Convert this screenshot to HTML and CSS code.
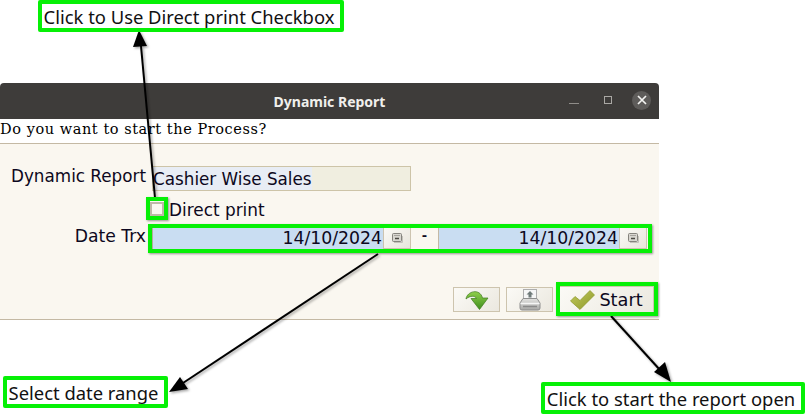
FILE: index.html
```html
<!DOCTYPE html>
<html lang="en">
<head>
    <meta charset="UTF-8">
    <title>Dynamic Report</title>
    <link rel="stylesheet" href="styles.css">
</head>
<body>
    <div class="pagina">
        <div class="janela">
            <div class="titulo">
                <span class="titulo-texto">Dynamic Report</span>
                <div class="controles">
                    <span class="ctl-min"></span>
                    <span class="ctl-max"></span>
                    <span class="ctl-close">
                        <svg width="10" height="10" viewBox="0 0 10 10"><path d="M1 1L9 9M9 1L1 9" stroke="#f4f4f2" stroke-width="1.7" fill="none"/></svg>
                    </span>
                </div>
            </div>
            <div class="pergunta">Do you want to start the Process?</div>
            <div class="form">
                <div class="linha linha-report">
                    <label class="rotulo">Dynamic Report</label>
                    <div class="campo-report"><span class="campo-sel">Cashier Wise Sales</span></div>
                </div>
                <div class="linha linha-check">
                    <span class="rotulo"></span>
                    <span class="check"></span>
                    <span class="check-texto">Direct print</span>
                </div>
                <div class="linha linha-data">
                    <label class="rotulo rotulo-data">Date Trx</label>
                    <div class="datas">
                        <div class="data data-1">14/10/2024</div>
                        <button class="cal">
                            <svg width="13" height="12" viewBox="0 0 13 12"><rect x="1.500" y="1.500" width="9" height="8" rx="1" fill="#d8d6d0" stroke="#85837d"/><path d="M3 3.500h6" stroke="#a5a39d"/><path d="M4 6.500h4" stroke="#4a4843" stroke-width="1.500"/><path d="M3 10.500h8.500V4" stroke="#c4c2bb" fill="none"/></svg>
                        </button>
                        <div class="traco">-</div>
                        <div class="data data-2">14/10/2024</div>
                        <button class="cal">
                            <svg width="13" height="12" viewBox="0 0 13 12"><rect x="1.500" y="1.500" width="9" height="8" rx="1" fill="#d8d6d0" stroke="#85837d"/><path d="M3 3.500h6" stroke="#a5a39d"/><path d="M4 6.500h4" stroke="#4a4843" stroke-width="1.500"/><path d="M3 10.500h8.500V4" stroke="#c4c2bb" fill="none"/></svg>
                        </button>
                    </div>
                </div>
                <div class="botoes">
                    <button class="botao">
                        <svg width="24" height="20" viewBox="0 0 24 20">
                            <defs>
                                <linearGradient id="verde" x1="0" y1="0" x2="0" y2="1"><stop offset="0" stop-color="#8fcf4a"/><stop offset="1" stop-color="#3f8f1e"/></linearGradient>
                            </defs>
                            <path d="M1 9C2 1 15 -2 17.500 8L23 8L14.500 19.500L6 8.500L11.500 8.500C10 5.500 5 5.500 1 9Z" fill="url(#verde)" stroke="#3d7a1c" stroke-width=".7"/>
                        </svg>
                    </button>
                    <button class="botao">
                        <svg width="22" height="23" viewBox="0 0 22 23">
                            <defs>
                                <linearGradient id="cinza" x1="0" y1="0" x2="0" y2="1"><stop offset="0" stop-color="#e2e2e0"/><stop offset="1" stop-color="#a8a8a6"/></linearGradient>
                            </defs>
                            <rect x="4.500" y="1.500" width="13" height="12" fill="#f6f6f6" stroke="#aeaeae"/>
                            <path d="M11 3L14.500 6.500H12.500V9.500H9.500V6.500H7.500Z" fill="#6f7a79"/>
                            <path d="M4 10.500H18L21 15V20Q21 22 19 22H3Q1 22 1 20V15Z" fill="url(#cinza)" stroke="#8e8e8e"/>
                            <path d="M1.500 15.500H20.500" stroke="#f5f5f5" stroke-width="1.500"/>
                            <path d="M4 18.500H18" stroke="#8a8a8a" stroke-width="1.500"/>
                        </svg>
                    </button>
                    <button class="botao botao-start">
                        <svg width="25" height="20" viewBox="0 0 25 20">
                            <defs>
                                <linearGradient id="oliva" x1="0" y1="0" x2="1" y2="1"><stop offset="0" stop-color="#c2c95c"/><stop offset="1" stop-color="#8e9a2c"/></linearGradient>
                            </defs>
                            <path d="M0.500 11L5 6.500L10 10.500L20 0.500L24.500 5L10 19.500Z" fill="url(#oliva)" stroke="#8a9528" stroke-width=".7"/>
                        </svg>
                        <span>Start</span>
                    </button>
                </div>
            </div>
        </div>

        <svg class="setas" width="806" height="414" viewBox="0 0 806 414">
            <defs>
                <filter id="sombra" x="-20%" y="-20%" width="140%" height="140%">
                    <feDropShadow dx="1.500" dy="1.500" stdDeviation="1" flood-color="#000" flood-opacity=".35"/>
                </filter>
            </defs>
            <g filter="url(#sombra)">
                <path d="M155 198L141 46" stroke="#000" stroke-width="2" fill="none"/>
                <path d="M139 30L133 47L147 46Z" fill="#000"/>
                <path d="M378 254L183 383" stroke="#000" stroke-width="2" fill="none"/>
                <path d="M169 392L180 377L188 389Z" fill="#000"/>
                <path d="M611 316L660 370" stroke="#000" stroke-width="2" fill="none"/>
                <path d="M671 382L654 372L665 362Z" fill="#000"/>
            </g>
        </svg>

        <div class="marca marca-check"></div>
        <div class="marca marca-datas"></div>
        <div class="marca marca-start"></div>

        <div class="nota nota-topo">Click to Use Direct print Checkbox</div>
        <div class="nota nota-data">Select date range</div>
        <div class="nota nota-start">Click to start the report open</div>
    </div>
</body>
</html>
```

FILE: styles.css
```css
*{
    margin: 0;
    padding: 0;
    box-sizing: border-box;
}
body{
    background-color: white;
    font-family: "DejaVu Sans", sans-serif;
    color: #0d0820;
}
.pagina{
    position: relative;
    width: 806px;
    height: 414px;
    overflow: hidden;
    padding-top: 83px;
}
.janela{
    width: 659px;
}
.titulo{
    height: 36px;
    background-color: #3e3c3a;
    border-radius: 4px 4px 0 0;
    display: flex;
    align-items: center;
    justify-content: center;
    position: relative;
}
.titulo-texto{
    font-family: "Noto Sans", sans-serif;
    font-weight: bold;
    font-size: 14px;
    color: #f0efec;
}
.controles{
    position: absolute;
    top: 0;
    right: 8px;
    height: 36px;
    display: flex;
    align-items: center;
}
.ctl-min{
    width: 10px;
    height: 1px;
    background-color: #8f8d89;
    margin-top: 5px;
    margin-right: 25px;
}
.ctl-max{
    width: 8px;
    height: 8px;
    border: 1px solid #aaa8a4;
    margin-right: 20px;
    margin-top: -2px;
}
.ctl-close{
    width: 19px;
    height: 19px;
    border-radius: 50%;
    background-color: #5e5c5a;
    display: flex;
    align-items: center;
    justify-content: center;
    margin-top: -2px;
}
.pergunta{
    height: 25px;
    background-color: white;
    border-bottom: 1px solid #c4b9a4;
    font-family: "DejaVu Serif", serif;
    font-size: 14.500px;
    letter-spacing: 0.56px;
    line-height: 21px;
    color: #000;
    white-space: nowrap;
}
.form{
    height: 176px;
    background-color: #faf7f0;
    border-bottom: 1px solid #c4b9a4;
    padding-top: 22px;
}
.linha{
    display: flex;
}
.rotulo{
    width: 146px;
    flex: none;
    text-align: right;
    font-size: 16.800px;
    white-space: nowrap;
}
.linha-report{
    height: 25px;
}
.campo-report{
    width: 259px;
    height: 25px;
    margin-left: 6px;
    background-color: #f0eee0;
    border: 1px solid #cdc4a8;
    font-size: 16.800px;
    line-height: 25px;
    white-space: nowrap;
}
.campo-sel{
    display: inline-block;
    height: 23px;
    background-color: #e8edf5;
}
.linha-check{
    height: 20px;
    margin-top: 8px;
    align-items: center;
}
.check{
    width: 14px;
    height: 14px;
    margin-left: 4px;
    background-color: #faf7f0;
    border: 2px solid #bfb8a8;
}
.check-texto{
    margin-left: 5px;
    margin-top: 2px;
    font-size: 16.900px;
}
.linha-data{
    height: 25px;
    margin-top: 6px;
}
.rotulo-data{
    line-height: 22px;
    font-size: 17.200px;
}
.datas{
    display: flex;
    margin-left: 5px;
    height: 25px;
    width: 496px;
}
.data{
    background-color: #c9ddf2;
    font-size: 17.300px;
    line-height: 27px;
    text-align: right;
    padding-right: 1px;
}
.data-1{
    width: 232px;
    border-left: 2px solid #b5ab97;
}
.data-2{
    width: 180px;
}
.cal{
    width: 28px;
    height: 23px;
    margin-top: 1px;
    background: linear-gradient(135deg, #fbfaf6, #e8e5dc);
    border: 1px solid #cdc4b0;
    display: flex;
    align-items: center;
    justify-content: center;
}
.traco{
    width: 28px;
    border-right: 1px solid #c4b9a4;
    text-align: center;
    font-size: 13px;
    font-weight: bold;
    line-height: 21px;
}
.botoes{
    display: flex;
    justify-content: flex-end;
    align-items: center;
    gap: 6px;
    margin-top: 36px;
    padding-right: 5px;
}
.botao{
    width: 47px;
    height: 25px;
    background: linear-gradient(135deg, #fbfaf6, #ebe8df);
    border: 1px solid #cdc4ae;
    display: flex;
    align-items: center;
    justify-content: center;
}
.botao-start{
    width: 95px;
    height: 27px;
    gap: 4px;
    font-family: "DejaVu Sans", sans-serif;
    font-size: 17.700px;
    color: #0d0820;
}
.setas{
    position: absolute;
    left: 0;
    top: 0;
}
.marca{
    position: absolute;
    border: 4px solid #06f006;
    box-shadow: 1px 1px 2px rgba(0, 0, 0, 0.4);
}
.marca-check{
    left: 146px;
    top: 197px;
    width: 22px;
    height: 23px;
}
.marca-datas{
    left: 148px;
    top: 224px;
    width: 504px;
    height: 29px;
}
.marca-start{
    left: 556px;
    top: 282px;
    width: 102px;
    height: 34px;
}
.nota{
    position: absolute;
    background-color: white;
    border: 4px solid #06f006;
    border-radius: 2px;
    padding-right: 4px;
    font-family: "Noto Sans", sans-serif;
    font-size: 18.400px;
    color: #111;
    white-space: nowrap;
    display: flex;
    align-items: center;
    justify-content: center;
}
.nota-topo{
    left: 38px;
    top: 0;
    width: 306px;
    height: 32px;
}
.nota-data{
    left: 3px;
    top: 376px;
    width: 165px;
    height: 32px;
}
.nota-start{
    left: 541px;
    top: 382px;
    width: 264px;
    height: 32px;
}
```
